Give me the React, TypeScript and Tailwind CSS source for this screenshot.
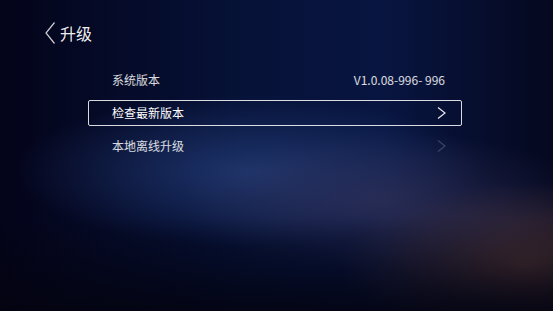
const ROWS = [
  { label: "系统版本", value: "V1.0.08-996- 996", arrow: false, active: false },
  { label: "检查最新版本", value: "", arrow: true, active: true },
  { label: "本地离线升级", value: "", arrow: true, active: false },
];

export default function App() {
  return (
    <div
      className="relative w-[553px] h-[311px] overflow-hidden bg-[#04051a] text-white"
      style={{ fontFamily: '"Noto Sans CJK SC", "Noto Sans", sans-serif' }}
    >
      {/* background glow layers */}
      <div className="absolute inset-0 bg-[linear-gradient(90deg,#04041a_0%,#061238_45%,#081540_70%,#05081f_100%)]" />
      <div className="absolute inset-0 bg-[radial-gradient(ellipse_60%_35%_at_45%_55%,rgba(35,60,120,0.8),transparent_70%)]" />
      <div className="absolute inset-0 bg-[radial-gradient(ellipse_45%_35%_at_95%_85%,rgba(100,65,60,0.75),transparent_75%)]" />
      <div className="absolute inset-0 bg-[radial-gradient(ellipse_50%_30%_at_70%_65%,rgba(60,55,90,0.55),transparent_75%)]" />
      <div className="absolute inset-0 bg-[linear-gradient(180deg,transparent_70%,rgba(3,3,15,0.85)_100%)]" />

      <div className="relative flex flex-col">
        {/* header */}
        <div className="flex items-center h-[22px] mt-[22px] ml-[45px]">
          <svg width="10" height="22" viewBox="0 0 10 22" className="text-white/80">
            <path d="M9.5 0.5 L1 11 L9.5 21.5" fill="none" stroke="currentColor" strokeWidth="1.2" />
          </svg>
          <span className="ml-[5px] text-[16px] leading-none text-white/95">升级</span>
        </div>

        {/* list */}
        <div className="flex flex-col gap-[7px] mt-[23px] ml-[88px] w-[374px]">
          {ROWS.map((r) => (
            <div
              key={r.label}
              className={`flex items-center justify-between h-[26px] pl-[23px] pr-[16px] rounded-[2px] border ${
                r.active ? "border-white/85" : "border-transparent"
              }`}
            >
              <span className={`text-[12px] ${r.active ? "text-white" : "text-white/85"}`}>{r.label}</span>
              {r.value && <span className="text-[12px] text-white/85">{r.value}</span>}
              {r.arrow && (
                <svg
                  width="9"
                  height="12"
                  viewBox="0 0 9 12"
                  className={r.active ? "text-white/90 mr-[-1px]" : "text-white/20 mr-[-1px]"}
                >
                  <path d="M1 0.5 L8 6 L1 11.5" fill="none" stroke="currentColor" strokeWidth="1.2" />
                </svg>
              )}
            </div>
          ))}
        </div>
      </div>
    </div>
  );
}
